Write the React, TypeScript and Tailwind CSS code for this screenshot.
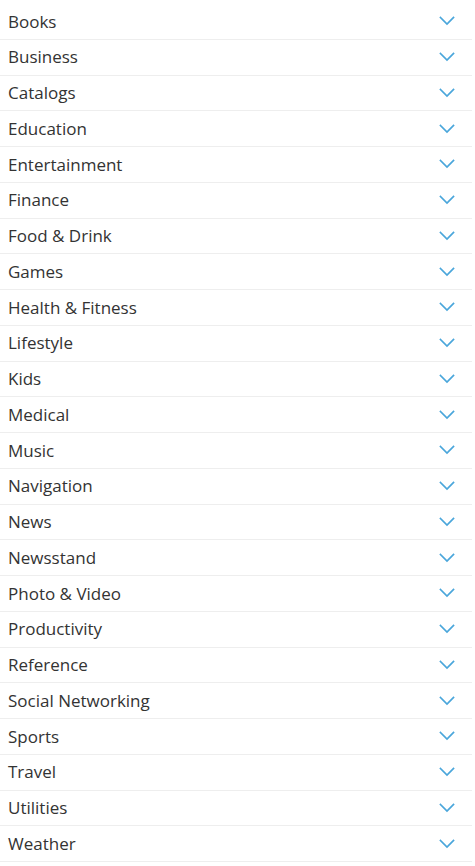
import React from "react";

const items = [
  "Books",
  "Business",
  "Catalogs",
  "Education",
  "Entertainment",
  "Finance",
  "Food & Drink",
  "Games",
  "Health & Fitness",
  "Lifestyle",
  "Kids",
  "Medical",
  "Music",
  "Navigation",
  "News",
  "Newsstand",
  "Photo & Video",
  "Productivity",
  "Reference",
  "Social Networking",
  "Sports",
  "Travel",
  "Utilities",
  "Weather",
];

function Chevron() {
  return (
    <svg width="16" height="10" viewBox="0 0 16 10" fill="none" className="shrink-0">
      <path d="M1.5 1.5 L8 8 L14.5 1.5" stroke="#4aa6db" strokeWidth="1.7" strokeLinecap="square" />
    </svg>
  );
}

export default function App() {
  return (
    <div className="w-[475px] bg-white pt-[4px] font-['Open_Sans',sans-serif]">
      <ul className="w-[472px]">
        {items.map((it) => (
          <li
            key={it}
            className="flex h-[35.75px] items-center justify-between border-b border-[#eeeeee] pl-[8px] pr-[17px] text-[17px] text-[#333333]"
          >
            <span>{it}</span>
            <Chevron />
          </li>
        ))}
      </ul>
    </div>
  );
}
